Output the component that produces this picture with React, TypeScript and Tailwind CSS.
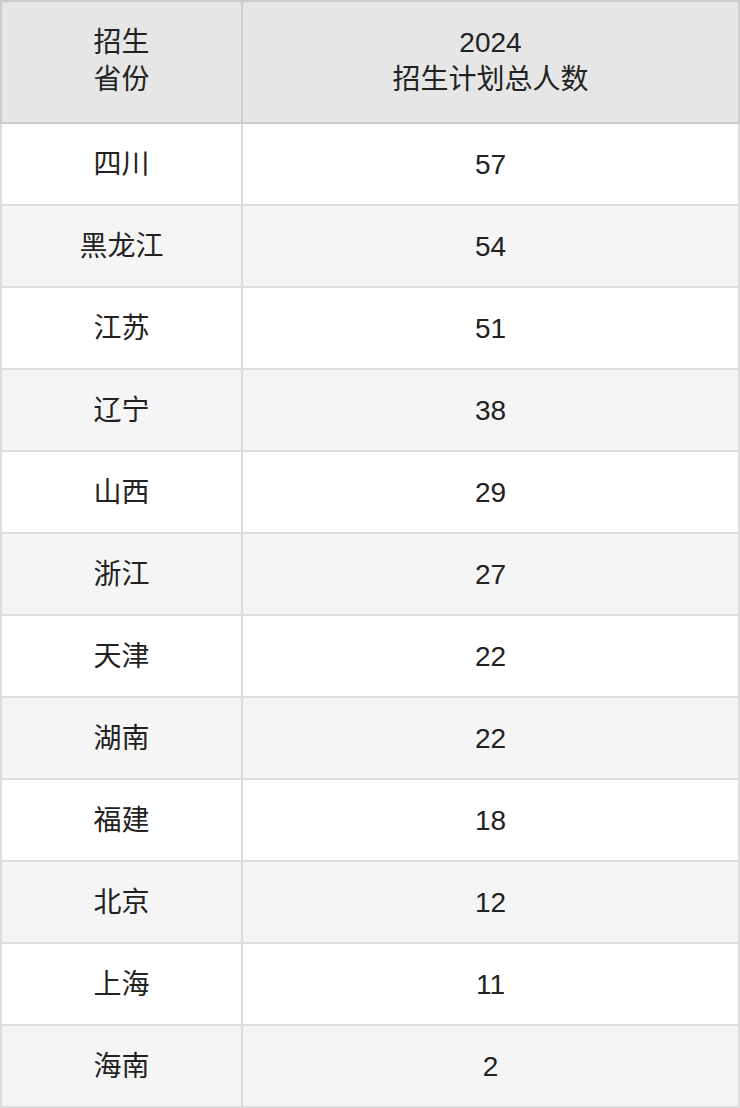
import React from "react";

interface Row {
  province: string;
  count: number;
}

const rows: Row[] = [
  { province: "四川", count: 57 },
  { province: "黑龙江", count: 54 },
  { province: "江苏", count: 51 },
  { province: "辽宁", count: 38 },
  { province: "山西", count: 29 },
  { province: "浙江", count: 27 },
  { province: "天津", count: 22 },
  { province: "湖南", count: 22 },
  { province: "福建", count: 18 },
  { province: "北京", count: 12 },
  { province: "上海", count: 11 },
  { province: "海南", count: 2 },
];

const font = {
  fontFamily: '"Liberation Sans", "Noto Sans CJK SC", sans-serif',
};

const App: React.FC = () => {
  return (
    <div className="w-[740px] bg-white text-[28px] leading-[37px] text-[#222]" style={font}>
      <div className="flex h-[124px] border-2 border-[#ccc] bg-[#e6e6e6]">
        <div className="flex w-[241px] flex-col items-center justify-center border-r-2 border-[#ccc] pb-[3px] text-center">
          <span>招生</span>
          <span>省份</span>
        </div>
        <div className="flex flex-1 flex-col items-center justify-center pb-[3px] text-center">
          <span>2024</span>
          <span>招生计划总人数</span>
        </div>
      </div>
      {rows.map((row, i) => (
        <div
          key={row.province}
          className={`flex h-[82px] border-x-2 border-b-2 border-[#ddd] ${
            i % 2 === 1 ? "bg-[#f5f5f5]" : "bg-white"
          }`}
        >
          <div className="flex w-[241px] items-center justify-center border-r-2 border-[#ddd]">
            {row.province}
          </div>
          <div className="flex flex-1 items-center justify-center">{row.count}</div>
        </div>
      ))}
    </div>
  );
};

export default App;
